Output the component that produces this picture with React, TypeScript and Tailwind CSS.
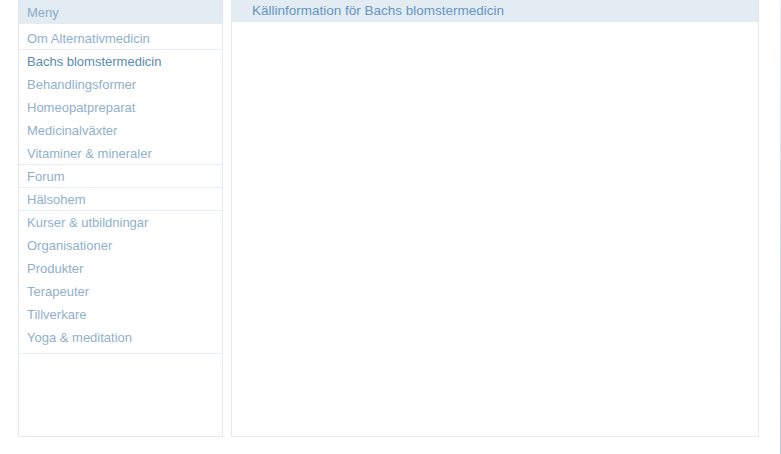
import React from "react";

const groups: { label: string; active?: boolean }[][] = [
  [{ label: "Om Alternativmedicin" }],
  [
    { label: "Bachs blomstermedicin", active: true },
    { label: "Behandlingsformer" },
    { label: "Homeopatpreparat" },
    { label: "Medicinalväxter" },
    { label: "Vitaminer & mineraler" },
  ],
  [{ label: "Forum" }],
  [{ label: "Hälsohem" }],
  [
    { label: "Kurser & utbildningar" },
    { label: "Organisationer" },
    { label: "Produkter" },
    { label: "Terapeuter" },
    { label: "Tillverkare" },
    { label: "Yoga & meditation" },
  ],
];

export default function App() {
  return (
    <div
      className="w-[781px] h-[454px] bg-white flex"
      style={{ fontFamily: '"Liberation Sans", Arial, sans-serif' }}
    >
      <div className="flex flex-1 pl-[18px] pr-[21px] gap-[8px]">
        {/* Left menu */}
        <div className="w-[205px] h-[437px] border-x border-b border-[#e0e9f1] flex flex-col">
          <div className="h-[24px] bg-[#e4ecf3] pl-[8px] text-[13px] leading-[25px] text-[#8aabc9]">
            Meny
          </div>
          <div className="pt-[3px]">
            {groups.map((g, gi) =>
              g.map((it, ii) => {
                const last = ii === g.length - 1;
                const yoga = gi === 4 && last;
                return (
                  <div
                    key={gi + "-" + ii}
                    className={
                      "pl-[8px] text-[13px] leading-[24px] " +
                      (yoga ? "h-[28px] " : "h-[23px] ") +
                      (last ? "border-b border-[#e6edf4] " : "") +
                      (it.active ? "text-[#5b89b3]" : "text-[#90b0ce]")
                    }
                  >
                    {it.label}
                  </div>
                );
              })
            )}
          </div>
        </div>
        {/* Main content */}
        <div className="flex-1 h-[437px] border-x border-b border-[#e1e9f1] flex flex-col">
          <div className="h-[22px] bg-[#e4ecf3] pl-[20px] text-[13.5px] leading-[22px] text-[#6595c1]">
            Källinformation för Bachs blomstermedicin
          </div>
        </div>
      </div>
      <div className="w-px h-full bg-gradient-to-b from-[#edf2f7] to-[#b4cadf]" />
    </div>
  );
}
